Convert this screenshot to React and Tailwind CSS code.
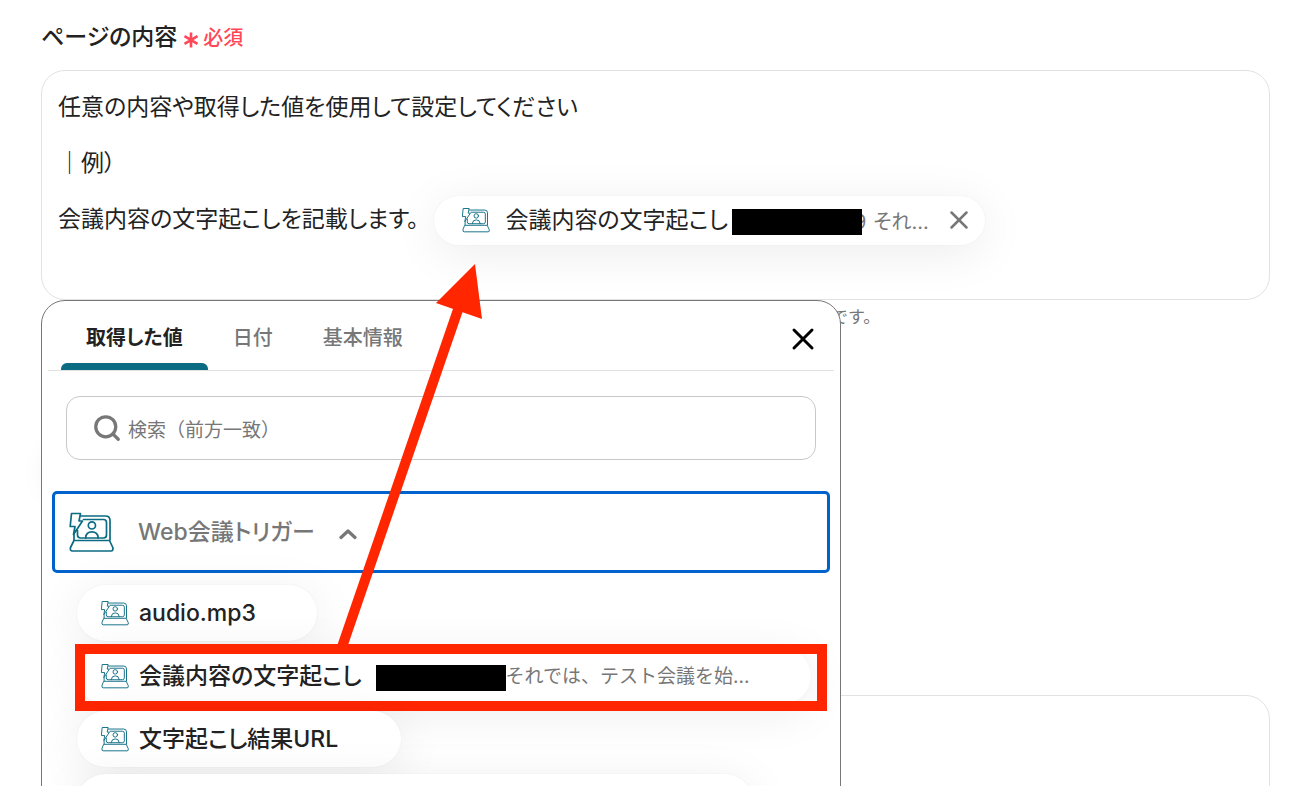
import { ChevronUp, Search, X } from 'lucide-react'

const VALUES = [
  { id: 'audio', name: 'audio.mp3', width: 'w-[240px]' },
  { id: 'transcript', name: '会議内容の文字起こし', preview: 'それでは、テスト会議を始...', width: 'w-[734px]', marked: true },
  { id: 'url', name: '文字起こし結果URL', width: 'w-[324px]' },
  { id: 'next', name: '', width: 'w-[676px]' },
]

const TABS = ['取得した値', '日付', '基本情報']

function MeetingIcon({ className, strokeWidth = 1.7 }) {
  return (
    <svg viewBox="0 0 45 40" fill="none" stroke="#0b6b82" strokeWidth={strokeWidth} strokeLinejoin="round" strokeLinecap="round" className={className} aria-hidden="true">
      <path d="M2.5 1.5H11.5L10 9H13.5L4.5 22.5L6 14.5H1.2Z" />
      <path d="M12 4H36.5Q41 4 41 8.5V28M5 22.5V28" />
      <path d="M14.5 7.5H34.5Q37.5 7.5 37.5 10.5V23Q37.5 26 34.5 26H11.5Q8.5 26 8.5 23V18.5" />
      <circle cx="22.9" cy="13.4" r="3.6" />
      <path d="M16.7 26V25.5Q17 19.8 22.9 19.8T29.1 25.5V26" />
      <path d="M5 28.5H40.5L43.8 35.5Q44.5 39 42 39H3.5Q.8 39 1.5 35.5Z" />
    </svg>
  )
}

function Redaction() {
  return <span className="relative z-1 h-[26px] w-[130px] shrink-0 bg-black" />
}

function ValueChip({ value }) {
  return (
    <li className={`relative ${value.width}`}>
      <button type="button" className="flex h-14 w-full items-center rounded-full bg-white pl-6 text-left shadow-[0_8px_48px_rgba(0,0,0,0.08),0_0_2px_rgba(0,0,0,0.06)]">
        {value.name && <MeetingIcon className="h-[26px] w-7 shrink-0" strokeWidth={1.5} />}
        <span className="ml-[10px] text-[23px] font-medium whitespace-nowrap text-[#222] [font-feature-settings:'palt']">{value.name}</span>
        {value.preview && (
          <span className="mt-[3px] ml-[14px] flex items-center text-[19px] whitespace-nowrap text-[#777]">
            <Redaction />
            {value.preview}
          </span>
        )}
      </button>
      {value.marked && (
        <span className="pointer-events-none absolute -top-1 -right-4 -bottom-[7px] -left-[2px] border-10 border-[#ff2600]" />
      )}
    </li>
  )
}

function ValuePicker() {
  return (
    <div className="absolute top-full left-0 h-[640px] w-[800px] rounded-t-[24px] border border-[#777] bg-white">
      <div className="mx-[6px] flex h-[70px] items-stretch border-b border-[#e2e2e2] pl-[13px]">
        <div role="tablist" className="flex">
          {TABS.map((tab, i) => (
            <button
              key={tab}
              type="button"
              role="tab"
              aria-selected={i === 0}
              className={`relative px-[25px] pt-1 text-[20px] [font-feature-settings:'palt'] ${i === 0 ? 'font-bold text-[#222]' : 'font-medium text-[#777]'}`}
            >
              {tab}
              {i === 0 && <span className="absolute inset-x-0 bottom-0 h-[7px] rounded-t-[6px] bg-[#0b6b82]" />}
            </button>
          ))}
        </div>
        <button type="button" aria-label="閉じる" className="mt-[6px] mr-[13px] ml-auto text-black">
          <X className="size-9" strokeWidth={2} />
        </button>
      </div>

      <label className="mx-6 mt-[25px] flex h-16 items-center rounded-[14px] border border-[#c8c8c8] pl-[25px]">
        <Search className="size-[30px] shrink-0 text-[#777]" strokeWidth={2.6} />
        <input
          type="text"
          aria-label="検索"
          placeholder="検索（前方一致）"
          className="ml-[6px] min-w-0 flex-1 pt-[6px] text-[19px] outline-none placeholder:text-[#777]"
        />
      </label>

      <button type="button" aria-expanded="true" className="mx-[10px] mt-[31px] flex h-[82px] w-[778px] items-center rounded-[5px] border-3 border-[#0062cc] pl-[14px] text-[#777]">
        <MeetingIcon className="h-10 w-[45px]" />
        <span className="ml-6 text-[23px] font-medium [font-feature-settings:'palt']">Web会議トリガー</span>
        <svg viewBox="0 0 18 12" className="mt-[3px] ml-6 h-3 w-[18px]" fill="none" stroke="currentColor" strokeWidth="3.2" strokeLinecap="round" strokeLinejoin="round" aria-hidden="true">
          <path d="M2 9.5L9 3L16 9.5" />
        </svg>
      </button>

      <ul className="mt-3 ml-[35px] flex flex-col gap-[7px]">
        {VALUES.map((value) => (
          <ValueChip key={value.id} value={value} />
        ))}
      </ul>
    </div>
  )
}

export default function App() {
  return (
    <main lang="ja" className="h-screen overflow-hidden bg-white pt-[18px] pr-[42px] pl-[41px] font-[Inter,'Noto_Sans_CJK_JP',sans-serif] text-[#222] antialiased">
      <h2 id="content-label" className="flex h-9 items-center pt-[2px] text-[23px] font-medium [font-feature-settings:'palt']">
        ページの内容
        <span className="ml-[6px] flex items-center gap-1 pt-[2px] text-[20px] text-[#ff4757]">
          <svg viewBox="0 0 16 16" className="mt-1 size-4" fill="none" stroke="currentColor" strokeWidth="2.6" aria-hidden="true">
            <path d="M8 .5V15.5M1.5 4.2L14.5 11.8M14.5 4.2L1.5 11.8" />
          </svg>
          必須
        </span>
      </h2>

      <div className="relative mt-4">
        <div
          role="textbox"
          aria-labelledby="content-label"
          aria-multiline="true"
          className="flex h-[230px] flex-col rounded-[24px] border border-[#e2e2e2] px-4 pt-2 text-[23px] [font-feature-settings:'palt']"
        >
          <p className="flex h-14 items-center">任意の内容や取得した値を使用して設定してください</p>
          <p className="flex h-14 items-center">｜例）</p>
          <div className="flex h-14 items-center whitespace-nowrap">
            会議内容の文字起こしを記載します。
            <span className="mt-[2px] ml-4 flex h-[49px] items-center rounded-full bg-white pr-[11px] pl-7 shadow-[0_8px_48px_rgba(0,0,0,0.08),0_0_2px_rgba(0,0,0,0.06)]">
              <MeetingIcon className="h-[26px] w-7" strokeWidth={1.5} />
              <span className="ml-[15px]">会議内容の文字起こし</span>
              <span className="mt-[3px] ml-1 flex items-center text-[20px] text-[#777]">
                <Redaction />
                <span className="-ml-2">9</span>
                <span className="ml-[7px]">それ...</span>
              </span>
              <button type="button" aria-label="削除" className="ml-[15px] text-[#777]">
                <X className="size-[30px]" strokeWidth={2} />
              </button>
            </span>
          </div>
        </div>

        <div className="absolute top-[372px] left-2 h-12 w-60 rounded-full shadow-[0_8px_32px_rgba(0,30,20,0.09)]" />
        <ValuePicker />

        <svg viewBox="0 0 160 390" className="pointer-events-none absolute top-[190px] left-[289px] z-10 h-[390px] w-[160px]" aria-hidden="true">
          <path d="M12 387L130 44" stroke="#ff2600" strokeWidth="10" />
          <path d="M145 4L152 59L106 43Z" fill="#ff2600" />
        </svg>
      </div>

      <p className="mt-[5px] pl-[790px] text-[17px] text-[#777]">です。</p>
      <div className="mt-[364px] h-[230px] rounded-[24px] border border-[#e2e2e2]" />
    </main>
  )
}
